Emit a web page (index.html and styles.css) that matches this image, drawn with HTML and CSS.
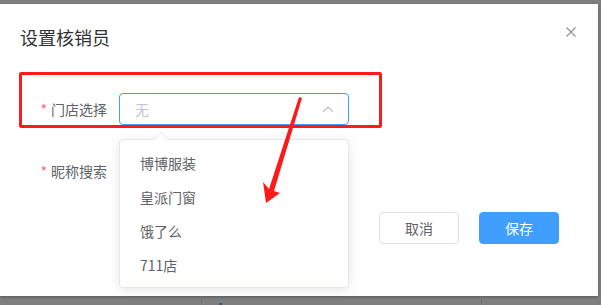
FILE: index.html
```html
<!DOCTYPE html>
<html lang="zh-CN">
<head>
  <meta charset="UTF-8" />
  <title>设置核销员</title>
  <link rel="stylesheet" href="styles.css">
</head>
<body>
  <div class="dialog">
    <div class="dialog-header">
      <span class="dialog-title">设置核销员</span>
      <svg class="dialog-close" width="10" height="10" viewBox="0 0 10 10">
        <path d="M0.5 0.5 L9.5 9.5 M9.5 0.5 L0.5 9.5" stroke="#909399" stroke-width="1.2" fill="none"/>
      </svg>
    </div>

    <div class="dialog-body">
      <div class="form-item">
        <label class="form-label"><span class="required">*</span>门店选择</label>
        <div class="select is-focus">
          <span class="select-placeholder">无</span>
          <svg class="select-arrow" width="12" height="8" viewBox="0 0 12 8">
            <path d="M1 7 L6 2 L11 7" stroke="#c0c4cc" stroke-width="1.3" fill="none"/>
          </svg>
        </div>
      </div>
      <div class="form-item">
        <label class="form-label"><span class="required">*</span>昵称搜索</label>
        <div class="select"></div>
      </div>
    </div>

    <div class="dialog-footer">
      <button class="btn">取消</button>
      <button class="btn btn-primary">保存</button>
    </div>

    <!-- dropdown of the store select -->
    <div class="dropdown">
      <div class="dropdown-arrow"></div>
      <ul class="dropdown-list">
        <li>博博服装</li>
        <li>皇派门窗</li>
        <li>饿了么</li>
        <li>711店</li>
      </ul>
    </div>

    <!-- annotation -->
    <div class="mark-box"></div>
    <svg class="mark-arrow" width="50" height="112" viewBox="0 0 50 112">
      <polygon points="37,0 40,1 12,94 18,96 4,106 1,85 7,92" fill="#ff1a1a"/>
    </svg>
  </div>

  <div class="backdrop-strip">
    <span class="strip-line"></span>
    <span class="strip-dot"></span>
    <span class="strip-line strip-line-right"></span>
  </div>
</body>
</html>
```

FILE: styles.css
```css
* {
  margin: 0;
  padding: 0;
  box-sizing: border-box;
}

body {
  font-family: "Noto Sans CJK SC", "Liberation Sans", sans-serif;
  background: #7f7f7f;
  width: 601px;
  height: 305px;
  overflow: hidden;
  padding-top: 4px;
}

.dialog {
  position: relative;
  width: 598px;
  height: 292px;
  background: #ffffff;
  box-shadow: 0 1px 3px rgba(0, 0, 0, 0.3);
}

.dialog-header {
  padding: 21px 20px 10px;
  display: flex;
  align-items: center;
  justify-content: space-between;
}

.dialog-title {
  font-size: 18px;
  line-height: 24px;
  color: #303133;
}

.dialog-close {
  margin-right: 2px;
  margin-top: -10px;
}

.dialog-body {
  padding: 30px 20px 0;
}

.form-item {
  display: flex;
  align-items: center;
  height: 40px;
  margin-bottom: 22px;
}

.form-label {
  width: 99px;
  padding-right: 12px;
  text-align: right;
  font-size: 14px;
  color: #606266;
}

.required {
  color: #f56c6c;
  margin-right: 4px;
}

.select {
  width: 230px;
  height: 32px;
  border: 1px solid #dcdfe6;
  border-radius: 4px;
  padding: 0 15px;
  display: flex;
  align-items: center;
  justify-content: space-between;
}

.select.is-focus {
  border-color: #409eff;
}

.select-placeholder {
  font-size: 14px;
  color: #c0c4cc;
}

.select-arrow {
  margin-right: -1px;
}

.dialog-footer {
  display: flex;
  justify-content: flex-end;
  gap: 20px;
  padding: 0 39px 0 0;
  margin-top: -1px;
}

.btn {
  width: 80px;
  height: 32px;
  font-family: inherit;
  font-size: 14px;
  border-radius: 4px;
  border: 1px solid #dcdfe6;
  background: #ffffff;
  color: #606266;
}

.btn-primary {
  background: #409eff;
  border-color: #409eff;
  color: #ffffff;
}

.dropdown {
  position: absolute;
  left: 119px;
  top: 135px;
  width: 230px;
  height: 149px;
  background: #ffffff;
  border: 1px solid #e4e7ed;
  border-radius: 4px;
  box-shadow: 0 2px 12px rgba(0, 0, 0, 0.1);
}

.dropdown-arrow {
  position: absolute;
  top: -6px;
  left: 36px;
  width: 10px;
  height: 10px;
  background: #ffffff;
  border-left: 1px solid #ebeef5;
  border-top: 1px solid #ebeef5;
  transform: rotate(45deg);
}

.dropdown-list {
  list-style: none;
  padding: 6px 0;
}

.dropdown-list li {
  height: 34px;
  line-height: 34px;
  padding: 0 20px;
  font-size: 14px;
  color: #606266;
}

.mark-box {
  position: absolute;
  left: 19px;
  top: 68px;
  width: 363px;
  height: 56px;
  border: 3px solid #ff1a1a;
  border-radius: 2px;
}

.mark-arrow {
  position: absolute;
  left: 262px;
  top: 93px;
}

.backdrop-strip {
  position: relative;
  height: 9px;
}

.strip-line {
  position: absolute;
  left: 201px;
  top: 0;
  width: 1px;
  height: 9px;
  background: #6f6f6f;
}

.strip-line-right {
  left: 481px;
}

.strip-dot {
  position: absolute;
  left: 219px;
  top: 7px;
  width: 3px;
  height: 2px;
  background: #2f5d8f;
}
```
